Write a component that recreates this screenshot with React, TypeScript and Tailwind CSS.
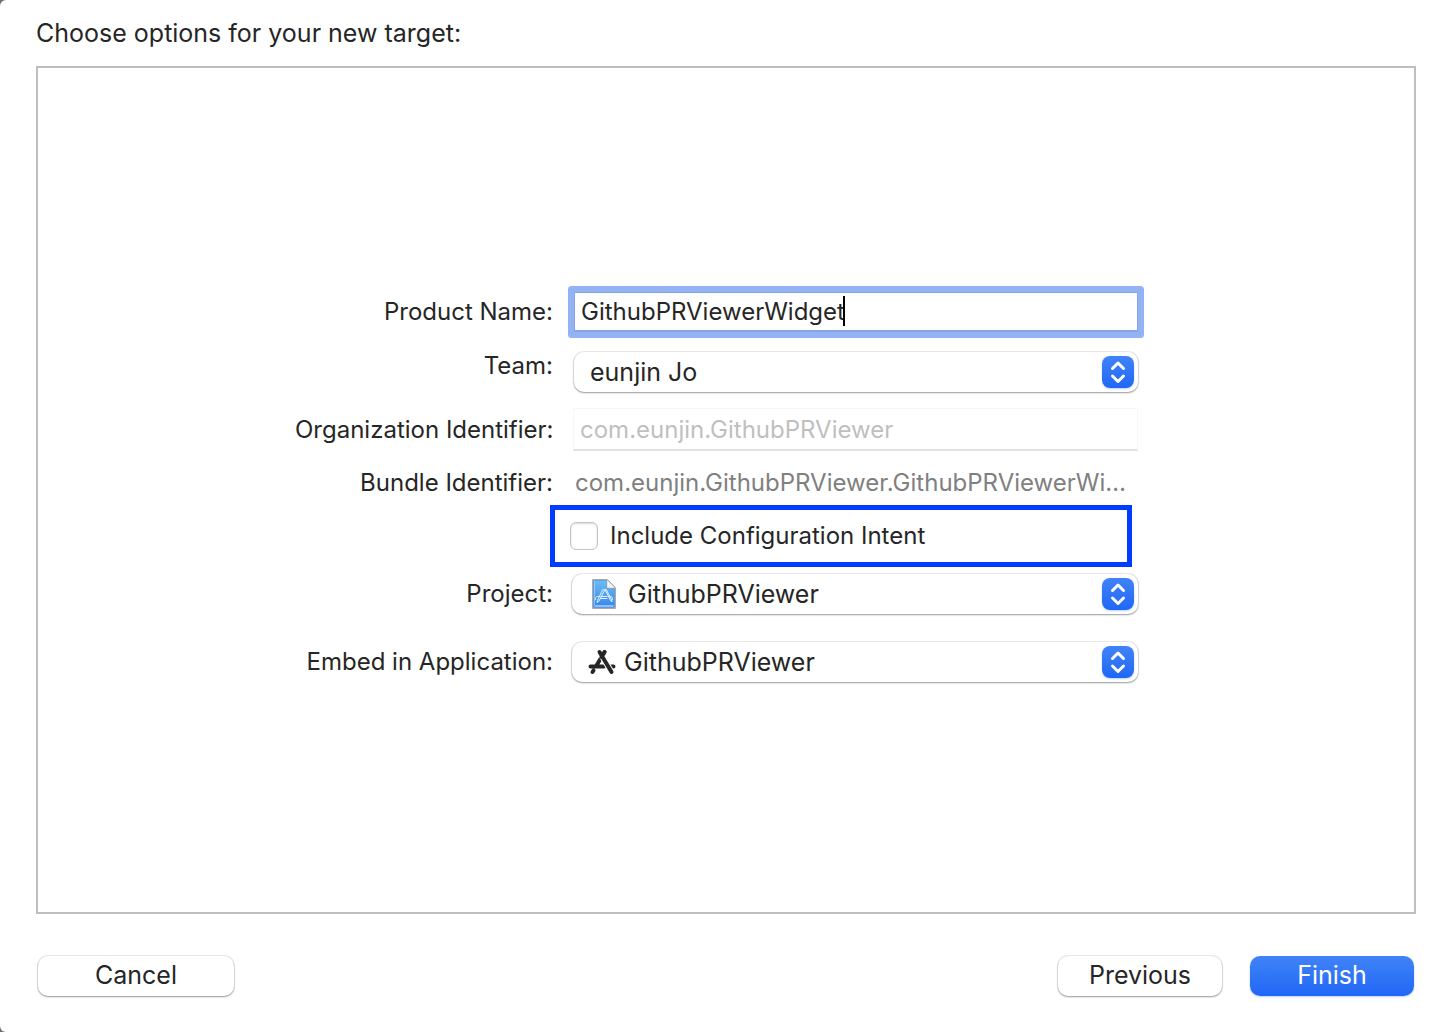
import type {ReactNode} from "react"
import clsx from "clsx"

function Chevrons() {
    return (
        <span
            className="pointer-events-none absolute right-1 top-1 flex h-8 w-8 items-center justify-center rounded-lg bg-linear-to-b from-[#4083f7] to-[#2067f6] shadow-[0_1px_2px_rgba(32,103,246,0.3)]">
            <svg viewBox="0 0 32 32" className="h-8 w-8" fill="none" stroke="white" strokeWidth="3"
                 strokeLinecap="round" strokeLinejoin="round">
                <path d="M10.500 12.500 16 7l5.500 5.500M10.500 20 16 25.500 21.500 20"/>
            </svg>
        </span>
    )
}

function ProjectIcon() {
    return (
        <svg viewBox="0 0 24 32" className="h-8 w-6" fill="none">
            <defs>
                <linearGradient id="doc" x1="0" y1="0" x2="0" y2="1">
                    <stop offset="0" stopColor="#6bbcf0"/>
                    <stop offset="1" stopColor="#3585f3"/>
                </linearGradient>
            </defs>
            <path d="M.5 1.500h15l8 8v21H.5z" fill="#fff" stroke="#a9a9a9"/>
            <path d="M1.500 2.500H15V10h7.500v19.500h-21z" fill="url(#doc)" stroke="#4a90d9" strokeWidth=".8"/>
            <path d="M15 2v8h8z" fill="#f4f4f4" stroke="#b8b8b8" strokeWidth=".6"/>
            <path d="M2.500 3.500v23.500" stroke="#a8d5fa" strokeWidth=".7"/>
            <path d="M2.500 28h19" stroke="#e8f4ff"/>
            <g stroke="#e4f3ff" strokeWidth="1" strokeLinecap="round" strokeLinejoin="round">
                <path d="m10.500 12-5 10.500-.5 2 2-1.500 5.500-10.500zM13 11.500l5.500 11 1.500 1.500-.5-2.500-5-9.500z"/>
                <path d="M9 18.500h6M8.500 20.500h6.500M7 18.500c-3-.5-3.500.5-3.500 3M17 18.500c3-.5 3.500.5 3.500 3"/>
            </g>
        </svg>
    )
}

function AppIcon() {
    return (
        <svg viewBox="0 0 28 26" className="h-[26px] w-7" fill="none" stroke="#262626" strokeWidth="4"
             strokeLinecap="round">
            <path d="m16.500 3-8 13.500M5.500 21.500 4.500 23M2.500 17.500h13.500M23 17.500h2.500"/>
            <path d="M11.500 3 23.500 23" stroke="white" strokeWidth="6" strokeLinecap="butt"/>
            <path d="m11.500 3 12 20"/>
            <path d="m16.500 3-3 5"/>
        </svg>
    )
}

type PopupProps = {
    id: string
    value: string
    icon?: ReactNode
    className?: string
    selectClass: string
}

function Popup({id, value, icon, className, selectClass}: PopupProps) {
    return (
        <div className={clsx("relative mr-px h-10 flex-1", className)}>
            {icon && <span className="pointer-events-none absolute inset-y-0 left-4 flex items-center">{icon}</span>}
            <select
                id={id}
                className={clsx(
                    "h-10 w-full appearance-none rounded-[10px] bg-white pr-10 text-[25px] leading-10 text-[#262626] shadow-[0_0_0_1px_rgba(0,0,0,0.08),0_1px_2px_rgba(0,0,0,0.35)] outline-none",
                    selectClass
                )}
            >
                <option>{value}</option>
            </select>
            <Chevrons/>
        </div>
    )
}

const labelClass = "w-[258px] shrink-0 whitespace-nowrap text-right"
const buttonClass = "h-10 rounded-[10px] pb-0.5 text-[25px]"
const plainButton = "bg-white shadow-[0_0_0_1px_rgba(0,0,0,0.08),0_1px_2px_rgba(0,0,0,0.35)]"

export default function App() {
    return (
        <div className="bg-[#6e6e6e]">
            <div
                className="flex min-h-screen flex-col rounded-l-md bg-white pb-9 pl-9 pr-8 pt-4 font-['Inter','Liberation_Sans',sans-serif] text-2xl leading-8 text-[#262626]">
                <h1 className="text-[25px] leading-[34px]">Choose options for your new target:</h1>

                <main className="mt-4 flex flex-1 items-center justify-center border-2 border-[#bebebe] pb-1.5 pr-[18px]">
                    <form className="flex w-[844px] flex-col">
                        <div className="flex items-center gap-[18px]">
                            <label htmlFor="product" className={labelClass}>Product Name:</label>
                            <div className="relative ml-[3px] mr-px flex-1">
                                <input
                                    id="product"
                                    type="text"
                                    defaultValue="GithubPRViewerWidget"
                                    className="block h-10 w-full rounded-[1px] border border-b-2 border-[#85a4e6] bg-white px-1.5 caret-transparent outline-none ring-6 ring-[#94b3f5]"
                                />
                                <span className="absolute left-[269px] top-1 h-[30px] w-0.5 bg-black"/>
                            </div>
                        </div>

                        <div className="mt-5 flex items-start gap-[18px]">
                            <label htmlFor="team" className={clsx(labelClass, "leading-7")}>Team:</label>
                            <Popup id="team" value="eunjin Jo" className="ml-[3px]" selectClass="pl-4"/>
                        </div>

                        <div className="mt-4 flex items-center gap-[18px]">
                            <label htmlFor="org" className={labelClass}>Organization Identifier:</label>
                            <input
                                id="org"
                                type="text"
                                disabled
                                defaultValue="com.eunjin.GithubPRViewer"
                                className="ml-0.5 mr-px h-[43px] min-w-0 flex-1 border border-b-2 border-[#f7f7f7] border-b-[#e2e2e2] bg-white px-1.5 text-[#bfbfbf]"
                            />
                        </div>

                        <div className="mt-4 flex items-center gap-[18px]">
                            <span className={labelClass}>Bundle Identifier:</span>
                            <span className="ml-1 whitespace-nowrap text-[#808080]">
                                com.eunjin.GithubPRViewer.GithubPRViewerWi…
                            </span>
                        </div>

                        <div className="ml-[255px] mr-[7px] mt-1.5 flex h-[62px] items-center border-5 border-[#003cff] pl-[15px]">
                            <input
                                id="intent"
                                type="checkbox"
                                className="h-7 w-7 appearance-none rounded-md border border-[#c4c4c4] bg-white shadow-[inset_0_1px_2px_rgba(0,0,0,0.15)]"
                            />
                            <label htmlFor="intent" className="pl-3">Include Configuration Intent</label>
                        </div>

                        <div className="mt-[7px] flex items-center gap-[18px]">
                            <label htmlFor="project" className={labelClass}>Project:</label>
                            <Popup id="project" value="GithubPRViewer" className="ml-px" selectClass="pl-14"
                                   icon={<span className="pl-1"><ProjectIcon/></span>}/>
                        </div>

                        <div className="mt-7 flex items-center gap-[18px]">
                            <label htmlFor="embed" className={labelClass}>Embed in Application:</label>
                            <Popup id="embed" value="GithubPRViewer" className="ml-px" selectClass="pl-[52px]"
                                   icon={<AppIcon/>}/>
                        </div>
                    </form>
                </main>

                <footer className="mt-[42px] flex px-0.5">
                    <button type="button" className={clsx(buttonClass, plainButton, "w-49")}>Cancel</button>
                    <button type="button" className={clsx(buttonClass, plainButton, "ml-auto w-41")}>Previous</button>
                    <button
                        type="submit"
                        className={clsx(buttonClass, "ml-7 w-41 bg-linear-to-b from-[#4083f7] to-[#2067f6] text-white shadow-[0_1px_2px_rgba(32,103,246,0.3)]")}
                    >
                        Finish
                    </button>
                </footer>
            </div>
        </div>
    )
}
